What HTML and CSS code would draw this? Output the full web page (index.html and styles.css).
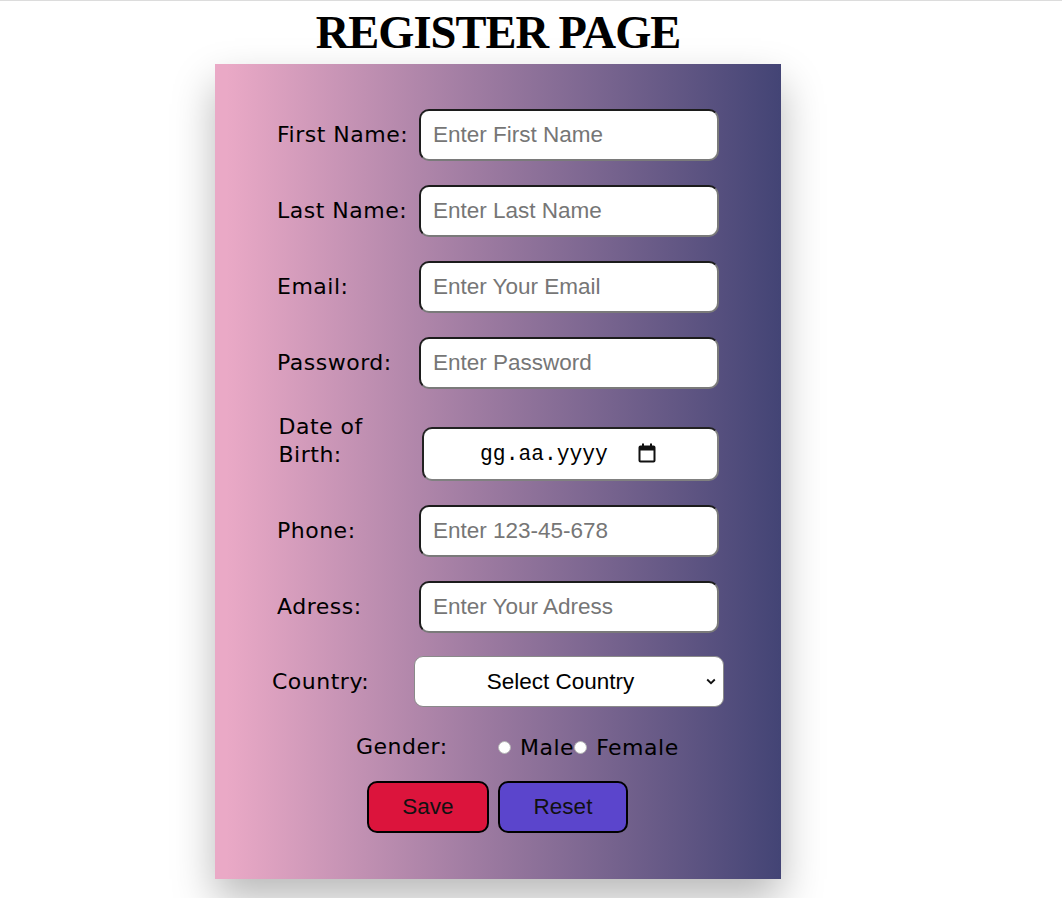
FILE: index.html
```html
<!DOCTYPE html>
<html lang="en">
<head>
<meta charset="utf-8">
<title>Register Page</title>
<link rel="stylesheet" href="styles.css">
</head>
<body>
<div class="page">
  <h1 class="title">REGISTER PAGE</h1>
  <form class="card">
    <div class="row">
      <label class="label" for="fn">First Name:</label>
      <input class="field" id="fn" type="text" placeholder="Enter First Name">
    </div>
    <div class="row">
      <label class="label" for="ln">Last Name:</label>
      <input class="field" id="ln" type="text" placeholder="Enter Last Name">
    </div>
    <div class="row">
      <label class="label" for="em">Email:</label>
      <input class="field" id="em" type="text" placeholder="Enter Your Email">
    </div>
    <div class="row">
      <label class="label" for="pw">Password:</label>
      <input class="field" id="pw" type="password" placeholder="Enter Password">
    </div>
    <div class="row row-date">
      <label class="label label-date">Date of Birth:</label>
      <div class="date-field">
        <span class="date-text">gg.aa.yyyy</span>
        <svg class="cal" width="18" height="20" viewBox="0 0 18 20" aria-hidden="true">
          <path d="M4 0.5h2v2h6v-2h2v2h1.5A2 2 0 0 1 17.5 4.5v13a2 2 0 0 1 -2 2h-13a2 2 0 0 1 -2 -2v-13a2 2 0 0 1 2 -2H4z M2.5 7.5v10h13v-10z" fill="#111" fill-rule="evenodd"/>
        </svg>
      </div>
    </div>
    <div class="row">
      <label class="label" for="ph">Phone:</label>
      <input class="field" id="ph" type="text" placeholder="Enter 123-45-678">
    </div>
    <div class="row">
      <label class="label" for="ad">Adress:</label>
      <input class="field" id="ad" type="text" placeholder="Enter Your Adress">
    </div>
    <div class="row">
      <label class="label" for="co">Country:</label>
      <div class="select-wrap">
        <select class="select" id="co">
          <option>Select Country</option>
        </select>
        <svg class="chevron" width="10" height="7" viewBox="0 0 10 7" aria-hidden="true">
          <path d="M1.2 1.5 L5 5.2 L8.8 1.5" fill="none" stroke="#111" stroke-width="1.8"/>
        </svg>
      </div>
    </div>
    <div class="row row-gender">
      <span class="label">Gender:</span>
      <input class="radio" type="radio" name="g" id="male"><label class="opt" for="male">Male</label><input class="radio" type="radio" name="g" id="female"><label class="opt" for="female">Female</label>
    </div>
    <div class="buttons">
      <button type="button" class="btn btn-save">Save</button>
      <button type="reset" class="btn btn-reset">Reset</button>
    </div>
  </form>
</div>
</body>
</html>
```
FILE: styles.css
```css
html {
  overflow: hidden;
  background: #fff;
}
html, body {
  margin: 0;
  padding: 0;
}
body {
  border-top: 1px solid #dcdcdc;
}
.page {
  width: 996px;
  padding-bottom: 20px;
  display: flex;
  flex-direction: column;
  align-items: center;
}
.title {
  margin: 5px 0 5px;
  font-family: "Liberation Serif", "Times New Roman", serif;
  font-weight: bold;
  font-size: 46.5px;
  letter-spacing: -1px;
  line-height: 53px;
  color: #000;
}
.card {
  width: 566px;
  box-sizing: border-box;
  padding: 45px 0 46px;
  background: linear-gradient(to right, #eaa9c6 2%, #434475 100%);
  box-shadow: 0 20px 40px rgba(0, 0, 0, 0.28);
  display: flex;
  flex-direction: column;
  align-items: center;
  gap: 24px;
}
.row {
  display: flex;
  align-items: center;
}
.label {
  width: 142px;
  box-sizing: border-box;
  flex: none;
  font-family: "DejaVu Sans", Verdana, sans-serif;
  font-size: 22px;
  letter-spacing: 0.5px;
  line-height: 26px;
  color: #000;
}
.field {
  width: 300px;
  height: 52px;
  box-sizing: border-box;
  margin: 0;
  padding: 0 12px;
  border-width: 2px;
  border-style: solid;
  border-color: #1c1c1c #7a7a7a #7a7a7a #1c1c1c;
  border-radius: 10px;
  background: #fff;
  font-family: "Liberation Sans", Arial, sans-serif;
  font-size: 22.5px;
  color: #000;
  outline: none;
}
.field::placeholder {
  color: #767676;
}
.row-date {
  align-items: flex-end;
}
.label-date {
  line-height: 28px;
  margin-bottom: 12px;
  padding-left: 1px;
}
.date-field {
  width: 297px;
  height: 54px;
  box-sizing: border-box;
  margin-left: 2px;
  border-width: 2px;
  border-style: solid;
  border-color: #222 #808080 #808080 #222;
  border-radius: 10px;
  background: #fff;
  display: flex;
  align-items: center;
  justify-content: center;
  gap: 30px;
  padding: 0 4px 0 0;
}
.date-text {
  font-family: "Liberation Mono", "Courier New", monospace;
  font-size: 21.3px;
  color: #000;
}
.cal {
  display: block;
  margin-top: -2px;
}
.select-wrap {
  position: relative;
}
.select {
  display: block;
  width: 310px;
  height: 51px;
  box-sizing: border-box;
  margin: -1px 0 0;
  padding: 0 21px 0 4px;
  border: 1px solid #8a8a8a;
  border-radius: 9px;
  background: #fff;
  appearance: none;
  -webkit-appearance: none;
  font-family: "Liberation Sans", Arial, sans-serif;
  font-size: 22.5px;
  color: #000;
  text-align: center;
  text-align-last: center;
}
.chevron {
  position: absolute;
  right: 8px;
  top: 21px;
}
.row-gender {
  align-self: flex-start;
  margin-left: 141px;
  margin-top: 2px;
  height: 28px;
}
.radio {
  appearance: none;
  -webkit-appearance: none;
  width: 13px;
  height: 13px;
  margin: 0;
  border: 1px solid #b5b5b5;
  border-radius: 50%;
  background: #fff;
  flex: none;
}
.opt {
  font-family: "DejaVu Sans", Verdana, sans-serif;
  font-size: 22px;
  letter-spacing: 0.5px;
  color: #000;
  margin-left: 9px;
}
.buttons {
  display: flex;
  gap: 9px;
  margin-top: -4px;
}
.btn {
  height: 52px;
  padding: 0;
  border: 2px solid #000;
  border-radius: 10px;
  font-family: "Liberation Sans", Arial, sans-serif;
  font-size: 22.5px;
  color: #111;
}
.btn-save {
  width: 122px;
  margin-left: -1px;
  background: #dc143c;
}
.btn-reset {
  width: 130px;
  background: #5b45cc;
}
```
